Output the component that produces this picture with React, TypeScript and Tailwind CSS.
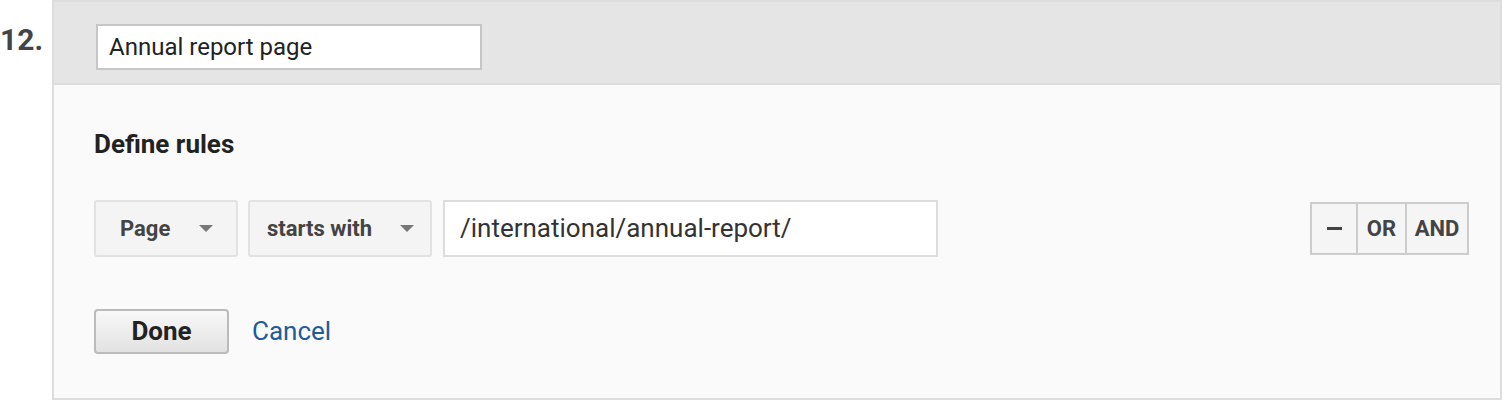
import React from "react";

function Arrow() {
  return (
    <svg width="14" height="7" viewBox="0 0 14 7" className="ml-auto shrink-0">
      <path d="M0 0H14L7 7Z" fill="#777777" />
    </svg>
  );
}

export default function App() {
  return (
    <div
      className="w-[1512px] h-[408px] bg-white flex"
      style={{ fontFamily: "Roboto, 'Liberation Sans', sans-serif" }}
    >
      <div className="w-[52px] shrink-0 pt-[25px] text-[30px] font-bold text-[#444444] leading-[30px]">
        12.
      </div>
      <div className="w-[1450px] h-[400px] border-2 border-[#dddddd] flex flex-col">
        <div className="h-[83px] shrink-0 bg-[#e5e5e5] border-b-2 border-[#dcdcdc] pl-[42px] pt-[22px]">
          <div className="w-[386px] h-[46px] bg-white border-2 border-[#c6c6c6] flex items-center pl-[11px] text-[24px] text-[#222222]">
            Annual report page
          </div>
        </div>
        <div className="flex-1 bg-[#fafafa] pl-[40px] pr-[31px] flex flex-col">
          <div className="mt-[44px] text-[26px] font-bold text-[#222222] leading-[30px]">
            Define rules
          </div>
          <div className="mt-[41px] flex items-center">
            <div className="w-[144px] h-[57px] border-2 border-[#e2e2e2] rounded-[3px] bg-[#f4f4f4] flex items-center pl-[24px] pr-[23px] text-[22px] font-bold text-[#444444]">
              Page
              <Arrow />
            </div>
            <div className="ml-[10px] w-[184px] h-[57px] border-2 border-[#e2e2e2] rounded-[3px] bg-[#f4f4f4] flex items-center pl-[17px] pr-[16px] text-[22px] font-bold text-[#444444]">
              starts with
              <Arrow />
            </div>
            <div className="ml-[11px] w-[495px] h-[57px] border-2 border-[#dddddd] bg-white flex items-center pl-[15px] text-[26px] text-[#333333]">
              /international/annual-report/
            </div>
            <div className="ml-auto flex h-[53px] border-2 border-[#cccccc] bg-[#f5f5f5] text-[22px] font-bold text-[#444444]">
              <div className="w-[46px] flex items-center justify-center border-r-2 border-[#cccccc]">
                <div className="w-[15px] h-[3px] bg-[#444444]" />
              </div>
              <div className="w-[49px] flex items-center justify-center border-r-2 border-[#cccccc]">
                OR
              </div>
              <div className="w-[60px] flex items-center justify-center">AND</div>
            </div>
          </div>
          <div className="mt-[52px] flex items-center">
            <div className="w-[135px] h-[45px] border-2 border-[#bbbbbb] rounded-[4px] bg-gradient-to-b from-[#f8f8f8] to-[#e2e2e2] flex items-center justify-center text-[26px] font-bold text-[#222222]">
              Done
            </div>
            <div className="ml-[23px] text-[26px] text-[#1f5b99]">Cancel</div>
          </div>
        </div>
      </div>
    </div>
  );
}
